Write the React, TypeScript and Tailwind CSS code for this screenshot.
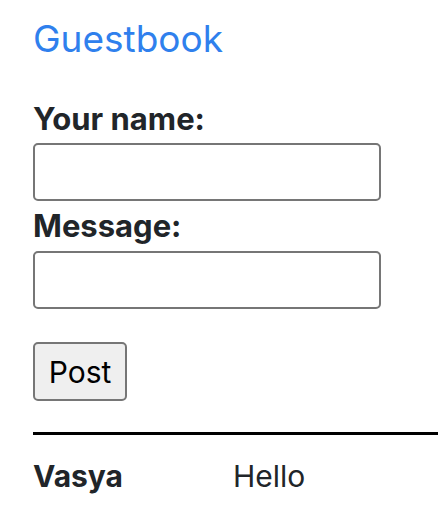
export default function App() {
  return (
    <div className="min-h-[520px] bg-white pl-[33px] pt-[19px] font-['Inter',sans-serif] text-[#212529] overflow-hidden">
      <h1 className="text-[37px] leading-[40px] text-[#2f80ed]">Guestbook</h1>

      <form className="mt-[43px] flex flex-col" onSubmit={(e) => e.preventDefault()}>
        <label className="text-[31px] font-bold leading-[34px]">Your name:</label>
        <input
          type="text"
          className="mt-[7px] h-[58px] w-[348px] rounded-[5px] border-2 border-[#767676] bg-white"
        />
        <label className="mt-[8px] text-[31px] font-bold leading-[34px]">Message:</label>
        <input
          type="text"
          className="mt-[8px] h-[58px] w-[348px] rounded-[5px] border-2 border-[#767676] bg-white"
        />
        <div className="mt-[33px]">
          <button
            type="submit"
            className="h-[59px] w-[94px] rounded-[5px] border-2 border-[#767676] bg-[#efefef] text-[30px] leading-none text-black"
          >
            Post
          </button>
        </div>
      </form>

      <hr className="mt-[31px] w-[420px] border-t-[3px] border-black" />

      <div className="mt-[24px] flex text-[30px] leading-[34px]">
        <div className="w-[200px] font-bold">Vasya</div>
        <div>Hello</div>
      </div>
    </div>
  );
}
